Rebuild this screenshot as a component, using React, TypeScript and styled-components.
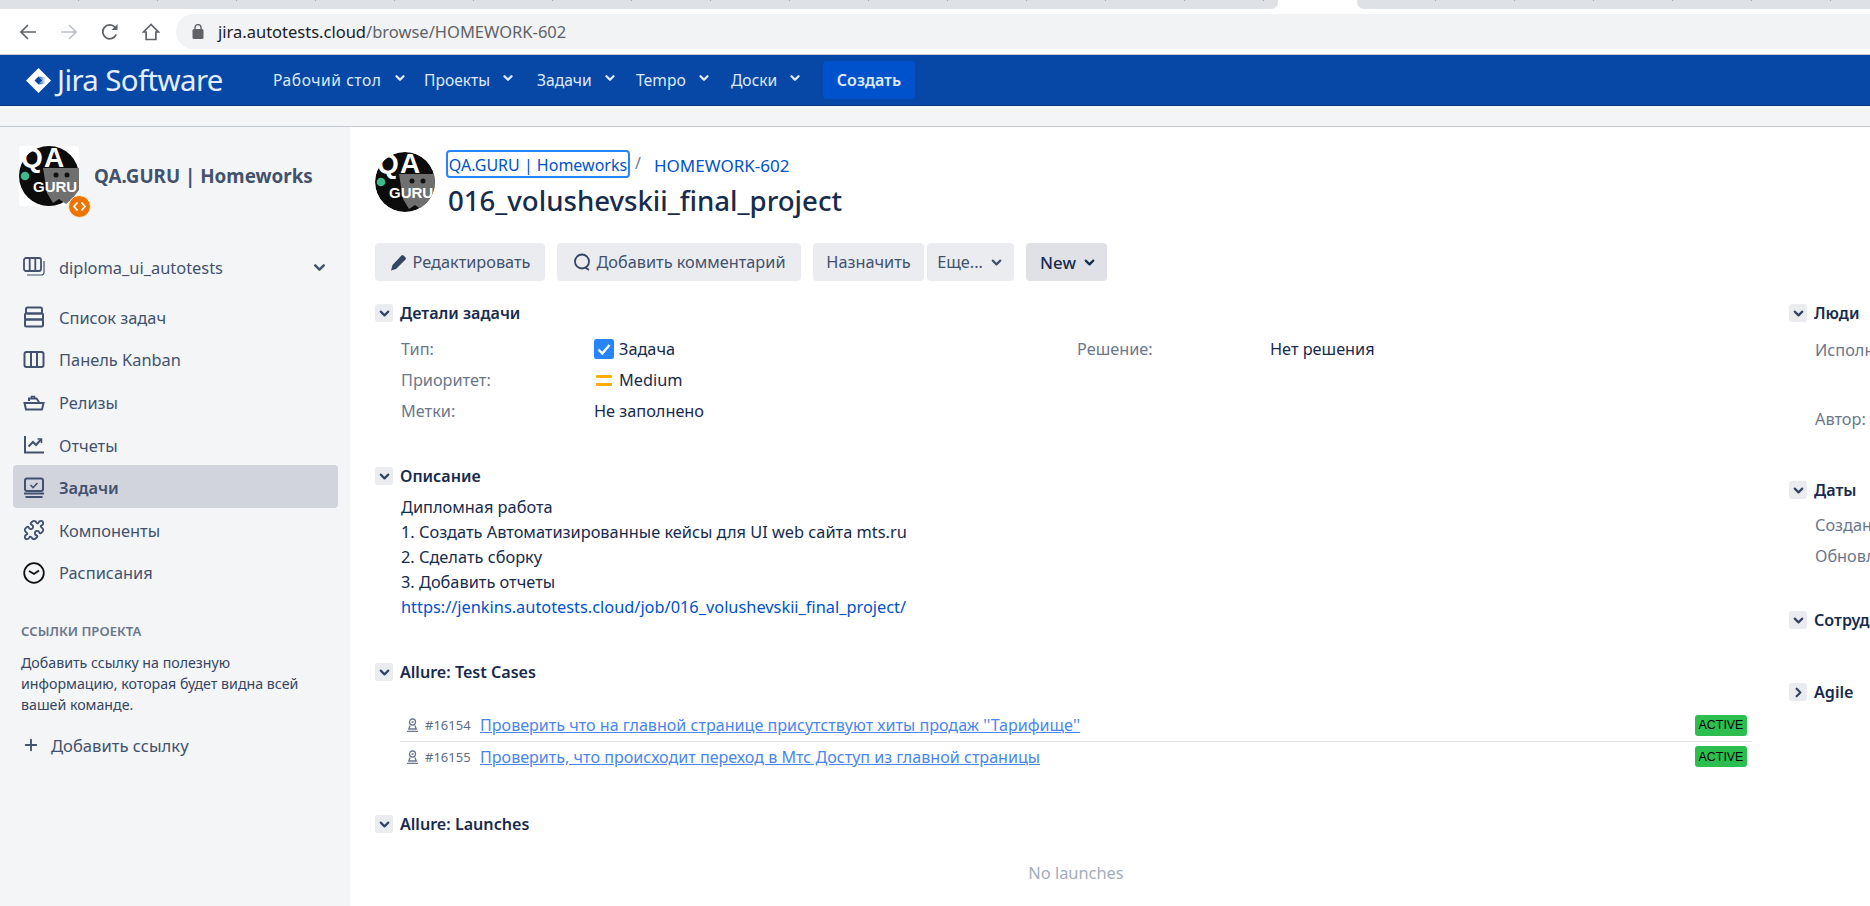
import React from 'react';
import styled, { createGlobalStyle } from 'styled-components';
import { ChevronDown, ChevronRight, Plus, Puzzle } from 'lucide-react';

const UI_FONT = '"Noto Sans", "Open Sans", sans-serif';

const GlobalStyle = createGlobalStyle`
  html, body {
    margin: 0;
    padding: 0;
    width: 1870px;
    height: 906px;
    overflow: hidden;
    background: #fff;
    font-family: ${UI_FONT};
    font-size: 16.3px;
    color: #172b4d;
  }
  * { box-sizing: border-box; }
`;

const Page = styled.div`
  width: 1870px;
  height: 906px;
  display: flex;
  flex-direction: column;
  overflow: hidden;
`;

const TabStrip = styled.div`
  height: 9px;
  display: flex;
  flex: none;
  background: #fff;
`;

const TabGroup = styled.div<{ $side: 'left' | 'right' }>`
  height: 9px;
  background-color: #dee1e6;
  background-image: repeating-linear-gradient(90deg, transparent 0 78px, #a9adb3 78px 79px);
  background-size: 100% 1px;
  background-repeat: no-repeat;
  ${(p) => (p.$side === 'left'
    ? 'width: 1278px; border-bottom-right-radius: 7px;'
    : 'margin-left: 79px; flex: 1; border-bottom-left-radius: 7px;')}
`;

const BrowserBar = styled.div`
  height: 46px;
  flex: none;
  display: flex;
  align-items: flex-start;
  padding: 5px 0 0 19px;
  background: #fff;
  border-bottom: 1px solid #c8cacd;
`;

const BrowserButtons = styled.div`
  width: 157px;
  height: 35px;
  flex: none;
  display: flex;
  align-items: center;
  gap: 23px;
`;

const AddressBar = styled.div`
  flex: 1;
  height: 35px;
  display: flex;
  align-items: center;
  gap: 14px;
  padding-left: 16px;
  background: #f1f3f4;
  border-radius: 18px 0 0 18px;
  font-size: 16.5px;
  color: #5f6368;
  white-space: nowrap;
`;

const Host = styled.span`
  color: #202124;
`;

const TopNav = styled.nav`
  height: 51px;
  flex: none;
  display: flex;
  align-items: center;
  padding-left: 26px;
  background: #0747a6;
  border-bottom: 1px solid #0b3a7c;
  color: #deebff;
`;

const Brand = styled.div`
  display: flex;
  align-items: center;
  gap: 6px;
  width: 247px;
  flex: none;
  font-size: 29.4px;
  letter-spacing: -0.6px;
  color: #e6eefc;
`;

const NavItem = styled.div<{ $width: number; $wide?: boolean }>`
  width: ${(p) => p.$width}px;
  flex: none;
  display: flex;
  align-items: center;
  gap: 11px;
  font-size: 15.6px;
  white-space: nowrap;
  letter-spacing: ${(p) => (p.$wide ? '0.55px' : '0')};
`;

const NavCaret = styled(ChevronDown)`
  margin-top: -4px;
`;

const CreateButton = styled.div`
  width: 92px;
  height: 38px;
  flex: none;
  display: flex;
  align-items: center;
  justify-content: center;
  border-radius: 4px;
  background: #0052cc;
  color: #deebff;
  font-size: 16px;
  font-weight: 600;
`;

const SubHeader = styled.div`
  height: 21px;
  flex: none;
  background: #f4f5f7;
  border-bottom: 1px solid #c1c7d0;
`;

const Body = styled.div`
  flex: 1;
  min-height: 0;
  display: flex;
`;

const Sidebar = styled.aside`
  width: 350px;
  flex: none;
  padding: 19px 12px 0 13px;
  background: #f4f5f7;
  color: #42526e;
`;

const ProjectHead = styled.div`
  display: flex;
  align-items: flex-start;
  gap: 15px;
  padding-left: 6px;
`;

const AvatarWrap = styled.div`
  position: relative;
  width: 60px;
  height: 60px;
  flex: none;
`;

const ProjectBadge = styled.div`
  position: absolute;
  right: -12px;
  bottom: -12px;
  width: 23px;
  height: 23px;
  border-radius: 50%;
  background: #ee7400;
  border: 1px solid #f4f5f7;
  display: flex;
  align-items: center;
  justify-content: center;
`;

const ProjectName = styled.div`
  margin-top: 17px;
  font-size: 18.8px;
  line-height: 26px;
  font-weight: 700;
  white-space: nowrap;
`;

const SideList = styled.div<{ $top: number }>`
  margin-top: ${(p) => p.$top}px;
  display: flex;
  flex-direction: column;
`;

const SideItem = styled.div<{ $active?: boolean }>`
  height: 42.6px;
  display: flex;
  align-items: center;
  gap: 14px;
  padding: 2px 10px 0;
  border-radius: 4px;
  font-size: 16.4px;
  white-space: nowrap;
  background: ${(p) => (p.$active ? '#d2d4dd' : 'transparent')};
  font-weight: ${(p) => (p.$active ? 600 : 400)};
`;

const BoardPicker = styled(SideItem)`
  padding-top: 0;
  justify-content: space-between;
`;

const PickerLabel = styled.div`
  display: flex;
  align-items: center;
  gap: 14px;
`;

const SideHeading = styled.div`
  margin: 29px 0 0 8px;
  font-size: 13.2px;
  line-height: 18px;
  font-weight: 600;
  color: #6b778c;
`;

const SideNote = styled.p`
  margin: 12px 0 0 8px;
  font-size: 14.2px;
  line-height: 21px;
  color: #344563;
`;

const AddLink = styled.div`
  margin: 18px 0 0 9px;
  height: 24px;
  display: flex;
  align-items: center;
  gap: 11px;
  font-size: 16.6px;
`;

const Content = styled.main`
  flex: 1;
  min-width: 0;
  display: grid;
  grid-template-columns: 1377px 1fr;
  column-gap: 37px;
  padding-left: 25px;
  background: #fff;
`;

const MainColumn = styled.div`
  padding-top: 23px;
`;

const IssueHead = styled.div`
  display: flex;
  gap: 11px;
`;

const HeadAvatar = styled.div`
  width: 60px;
  height: 60px;
  flex: none;
  margin-top: 2px;
  border-radius: 50%;
  overflow: hidden;
`;

const Breadcrumbs = styled.div`
  height: 28px;
  display: flex;
  align-items: center;
  font-size: 17px;
  color: #0052cc;
  white-space: nowrap;
`;

const FocusedCrumb = styled.span`
  height: 28px;
  width: 184px;
  padding-top: 2px;
  display: flex;
  align-items: center;
  justify-content: center;
  border: 2px solid #2684ff;
  border-radius: 4px;
  font-size: 16px;
`;

const CrumbSlash = styled.span`
  width: 24px;
  padding-left: 5px;
  margin-top: -3px;
  font-size: 16px;
  color: #6b778c;
`;

const CrumbKey = styled.span`
  padding-top: 3px;
`;

const IssueTitle = styled.h1`
  margin: 2px 0 0 2px;
  height: 40px;
  font-size: 27.6px;
  line-height: 40px;
  font-weight: 500;
  color: #172b4d;
  white-space: nowrap;
`;

const Toolbar = styled.div`
  margin-top: 23px;
  height: 38px;
  display: flex;
`;

const ToolButton = styled.div<{ $width: number; $gap: number; $strong?: boolean }>`
  width: ${(p) => p.$width}px;
  margin-right: ${(p) => p.$gap}px;
  padding-left: ${(p) => (p.$strong ? 4 : 0)}px;
  height: 38px;
  flex: none;
  display: flex;
  align-items: center;
  justify-content: center;
  gap: 6px;
  border-radius: 4px;
  font-size: ${(p) => (p.$strong ? '16.8px' : '16.3px')};
  white-space: nowrap;
  background: ${(p) => (p.$strong ? '#dfe1e6' : '#ebecf0')};
  color: ${(p) => (p.$strong ? '#172b4d' : '#42526e')};
  font-weight: ${(p) => (p.$strong ? 500 : 400)};
`;

const SectionHead = styled.div<{ $top: number }>`
  margin-top: ${(p) => p.$top}px;
  height: 20px;
  display: flex;
  align-items: center;
  gap: 7px;
  font-size: 16.1px;
  font-weight: 600;
  color: #172b4d;
  white-space: nowrap;
`;

const Toggle = styled.span`
  width: 18px;
  height: 18px;
  flex: none;
  display: flex;
  align-items: center;
  justify-content: center;
  border-radius: 3px;
  background: #ebecf0;
  color: #344563;
`;

const DetailGrid = styled.div`
  margin-top: 10.5px;
  padding-left: 26px;
  display: grid;
  grid-template-columns: 193px 483px 193px 1fr;
  grid-auto-rows: 31px;
  align-items: center;
  font-size: 16.3px;
`;

const FieldLabel = styled.div`
  color: #6b778c;
  white-space: nowrap;
`;

const FieldValue = styled.div`
  display: flex;
  align-items: center;
  gap: 5px;
  color: #172b4d;
`;

const Description = styled.div`
  margin-top: 8.5px;
  padding-left: 26px;
  font-size: 16.35px;
  line-height: 25px;
  color: #172b4d;
`;

const PlainLink = styled.div`
  color: #0052cc;
`;

const CaseList = styled.div`
  margin: 29px 0 0 25px;
`;

const CaseRow = styled.div<{ $divider?: boolean }>`
  height: 31px;
  display: flex;
  align-items: center;
  padding: 0 5px 2px 6px;
  font-size: 16.1px;
  white-space: nowrap;
  border-bottom: ${(p) => (p.$divider ? '1px solid #e4e6ed' : 'none')};
`;

const CaseId = styled.span`
  width: 45px;
  margin: 0 10px 0 6px;
  font-size: 13px;
  color: #5e6c84;
`;

const CaseLink = styled.span`
  flex: 1;
  color: #4a86f0;
  text-decoration: underline;
`;

const StatusBadge = styled.span`
  width: 52px;
  height: 21px;
  display: flex;
  align-items: center;
  justify-content: center;
  border-radius: 3px;
  background: #2cbe4e;
  color: #000;
  font-family: "Liberation Sans", Arial, sans-serif;
  font-size: 12.4px;
`;

const EmptyNote = styled.div`
  margin: 27px 0 0 25px;
  height: 24px;
  line-height: 24px;
  text-align: center;
  font-size: 16.4px;
  color: #a5adba;
`;

const SideColumn = styled.div`
  padding-top: 176px;
  white-space: nowrap;
`;

const PeopleRow = styled.div<{ $top: number }>`
  margin-top: ${(p) => p.$top}px;
  padding-left: 26px;
  height: 24px;
  line-height: 24px;
  font-size: 16.3px;
  color: #6b778c;
`;

const JiraMark = () => (
  <svg width="25" height="25" viewBox="0 0 25 25">
    <defs>
      <linearGradient id="jiraFade" x1="0" y1="0" x2="1" y2="0">
        <stop offset="0" stopColor="#0747a6" />
        <stop offset="1" stopColor="#fff" />
      </linearGradient>
    </defs>
    <path
      d="M12.5 0 L25 12.5 L12.500 25 L0 12.500 Z M12.500 8.500 L8.500 12.500 L12.500 16.500 L16.500 12.500 Z"
      fill="#fff"
      fillRule="evenodd"
    />
    <path d="M12.500 8.500 L16.500 12.500 L12.500 16.500 L19 16 L19.500 9.500 Z" fill="url(#jiraFade)" />
  </svg>
);

const BackIcon = ({ color = '#5f6368' }: { color?: string }) => (
  <svg width="18" height="18" viewBox="0 0 18 18" fill="none" stroke={color} strokeWidth="1.7">
    <path d="M17 9H2M9 2L2 9l7 7" />
  </svg>
);

const ForwardIcon = () => (
  <svg width="18" height="18" viewBox="0 0 18 18" fill="none" stroke="#bdc1c6" strokeWidth="1.7">
    <path d="M1 9h15M9 2l7 7-7 7" />
  </svg>
);

const ReloadIcon = () => (
  <svg width="18" height="18" viewBox="0 0 18 18" fill="none" stroke="#5f6368" strokeWidth="1.8">
    <path d="M15.2 11.5A7 7 0 1 1 14 4.2" />
    <path d="M16.5 1v6h-6z" fill="#5f6368" stroke="none" />
  </svg>
);

const HomeIcon = () => (
  <svg width="18" height="18" viewBox="0 0 18 18" fill="none" stroke="#5f6368" strokeWidth="1.7">
    <path d="M9 1.500L1.500 9h2.600v7.500h9.800V9h2.600z" />
  </svg>
);

const LockIcon = () => (
  <svg width="12" height="15" viewBox="0 0 12 15" fill="#5f6368">
    <rect x="0.5" y="5" width="11" height="10" rx="1.5" />
    <path d="M3 5V3.600a3 3 0 0 1 6 0V5" fill="none" stroke="#5f6368" strokeWidth="1.4" />
  </svg>
);

const BoardIcon = () => (
  <svg width="22" height="22" viewBox="0 0 22 22" fill="none" stroke="#42526e" strokeWidth="1.8">
    <rect x="1" y="2" width="17" height="13" rx="2" />
    <path d="M6.700 2v13M12.300 2v13" />
    <path d="M4 19h14.500a2.500 2.500 0 0 0 2.500-2.500V5" strokeWidth="1.2" />
  </svg>
);

const BacklogIcon = () => (
  <svg width="22" height="22" viewBox="0 0 22 22" fill="none" stroke="#42526e" strokeWidth="2">
    <rect x="3" y="1.500" width="16" height="6" rx="1.500" />
    <rect x="2" y="7.500" width="18" height="6" rx="1" />
    <rect x="2" y="13.500" width="18" height="7" rx="1.500" />
  </svg>
);

const KanbanIcon = () => (
  <svg width="22" height="22" viewBox="0 0 22 22" fill="none" stroke="#42526e" strokeWidth="2">
    <rect x="1.500" y="3" width="19" height="15" rx="2" />
    <path d="M8 3v15M14 3v15" />
  </svg>
);

const ReleaseIcon = () => (
  <svg width="22" height="22" viewBox="0 0 22 22" fill="none" stroke="#42526e" strokeWidth="2">
    <path d="M6 9V6.500h7.500L16 10" />
    <path d="M1.500 11h19l-1.500 6.500H3z" />
    <path d="M8.500 6.500V4.500h3v2" strokeWidth="1.6" />
  </svg>
);

const ReportIcon = () => (
  <svg width="22" height="22" viewBox="0 0 22 22" fill="none" stroke="#42526e" strokeWidth="2">
    <path d="M2 2v16.500h19" />
    <path d="M5.500 12.500L10 8l3 3 5-5.500" />
    <path d="M14.500 5h4v4" strokeWidth="1.6" />
  </svg>
);

const IssuesIcon = () => (
  <svg width="22" height="22" viewBox="0 0 22 22" fill="none" stroke="#42526e" strokeWidth="2">
    <rect x="2" y="1.500" width="18" height="12.500" rx="2" />
    <path d="M7.500 8l2.500 2.500 4.500-4.500" strokeWidth="1.6" />
    <path d="M1 16.500h20M2.500 20h17" />
  </svg>
);

const ScheduleIcon = () => (
  <svg width="22" height="22" viewBox="0 0 22 22" fill="none" stroke="#111" strokeWidth="1.8">
    <circle cx="11" cy="11" r="9.800" />
    <path d="M6 9l5 3 5-3.500" />
  </svg>
);

const TaskIcon = () => (
  <svg width="20" height="20" viewBox="0 0 20 20">
    <rect width="20" height="20" rx="2.500" fill="#2684ff" />
    <path d="M4.500 10.500l3.800 4L15.500 6" fill="none" stroke="#fff" strokeWidth="2.400" />
  </svg>
);

const MediumIcon = () => (
  <svg width="20" height="20" viewBox="0 0 20 20" fill="#ffab00">
    <rect x="2" y="5" width="16" height="3" rx="1" />
    <rect x="2" y="13" width="16" height="3" rx="1" />
  </svg>
);

const PencilIcon = () => (
  <svg width="17" height="17" viewBox="0 0 17 17" fill="#344563">
    <path d="M11.500 1.500a1.500 1.500 0 0 1 2.100 0l1.900 1.900a1.500 1.500 0 0 1 0 2.100L6 15l-5 1.500L2.500 11z" />
  </svg>
);

const CommentIcon = () => (
  <svg width="18" height="18" viewBox="0 0 18 18" fill="none" stroke="#344563" strokeWidth="1.800">
    <circle cx="9" cy="8.500" r="7" />
    <path d="M12.500 14.500L16 17" />
  </svg>
);

const AutomatedIcon = () => (
  <svg width="13" height="14" viewBox="0 0 13 14" fill="none" stroke="#6b778c" strokeWidth="1.300">
    <circle cx="6.500" cy="4" r="3" />
    <path d="M4 7.500l-1.200 3.500h7.400L9 7.500M1 13.300h11M5.500 4h2" />
  </svg>
);

const ProjectLogo = () => (
  <svg width="60" height="60" viewBox="0 0 60 60">
    <rect width="60" height="60" rx="3" fill="#fff" />
    <circle cx="30" cy="30" r="30" fill="#0c0c0c" />
    <path d="M24 22h36v22l-7 9-6 5-7-5-6 4-6-10z" fill="#6f6f6f" />
    <text x="2" y="21" fontFamily="Liberation Sans, sans-serif" fontWeight="700" fontSize="28" fill="#fff">Q</text>
    <text x="25" y="21" fontFamily="Liberation Sans, sans-serif" fontWeight="700" fontSize="28" fill="#fff">A</text>
    <circle cx="13" cy="11" r="4.500" fill="#0c0c0c" />
    <text x="14" y="46" fontFamily="Liberation Sans, sans-serif" fontWeight="700" fontSize="15" fill="#fff">GURU</text>
    <circle cx="6" cy="30" r="4.300" fill="#3dba8c" />
    <circle cx="37" cy="29" r="2.500" fill="#111" />
    <circle cx="48" cy="29" r="2.500" fill="#111" />
  </svg>
);

const CodeBadgeIcon = () => (
  <svg width="13" height="11" viewBox="0 0 13 11" fill="none" stroke="#fff" strokeWidth="1.800">
    <path d="M4.500 1.500L1 5.500l3.500 4M8.500 1.500l3.500 4-3.500 4" />
  </svg>
);

const navItems = [
  { label: 'Рабочий стол', width: 151, wide: true },
  { label: 'Проекты', width: 113 },
  { label: 'Задачи', width: 99 },
  { label: 'Tempo', width: 95 },
  { label: 'Доски', width: 92 },
];

const sideItems = [
  { label: 'Список задач', icon: <BacklogIcon /> },
  { label: 'Панель Kanban', icon: <KanbanIcon /> },
  { label: 'Релизы', icon: <ReleaseIcon /> },
  { label: 'Отчеты', icon: <ReportIcon /> },
  { label: 'Задачи', icon: <IssuesIcon />, active: true },
  { label: 'Компоненты', icon: <Puzzle size={22} color="#42526e" strokeWidth={2} /> },
  { label: 'Расписания', icon: <ScheduleIcon /> },
];

const testCases = [
  { id: '#16154', title: "Проверить что на главной странице присутствуют хиты продаж ''Тарифище''", divider: true },
  { id: '#16155', title: 'Проверить, что происходит переход в Мтс Доступ из главной страницы', divider: false },
];

const Section: React.FC<{ title: string; top: number; closed?: boolean }> = ({ title, top, closed }) => (
  <SectionHead $top={top}>
    <Toggle>
      {closed ? <ChevronRight size={15} strokeWidth={3.5} /> : <ChevronDown size={15} strokeWidth={3.5} />}
    </Toggle>
    {title}
  </SectionHead>
);

const App: React.FC = () => (
  <Page>
    <GlobalStyle />
    <TabStrip>
      <TabGroup $side="left" />
      <TabGroup $side="right" />
    </TabStrip>
    <BrowserBar>
      <BrowserButtons>
        <BackIcon />
        <ForwardIcon />
        <ReloadIcon />
        <HomeIcon />
      </BrowserButtons>
      <AddressBar>
        <LockIcon />
        <span>
          <Host>jira.autotests.cloud</Host>/browse/HOMEWORK-602
        </span>
      </AddressBar>
    </BrowserBar>
    <TopNav>
      <Brand>
        <JiraMark />
        Jira Software
      </Brand>
      {navItems.map((item) => (
        <NavItem key={item.label} $width={item.width} $wide={item.wide}>
          {item.label}
          <NavCaret size={14} strokeWidth={4} />
        </NavItem>
      ))}
      <CreateButton>Создать</CreateButton>
    </TopNav>
    <SubHeader />
    <Body>
      <Sidebar>
        <ProjectHead>
          <AvatarWrap>
            <ProjectLogo />
            <ProjectBadge>
              <CodeBadgeIcon />
            </ProjectBadge>
          </AvatarWrap>
          <ProjectName>QA.GURU | Homeworks</ProjectName>
        </ProjectHead>
        <SideList $top={40}>
          <BoardPicker>
            <PickerLabel>
              <BoardIcon />
              diploma_ui_autotests
            </PickerLabel>
            <ChevronDown size={17} strokeWidth={3.5} />
          </BoardPicker>
        </SideList>
        <SideList $top={6.5}>
          {sideItems.map((item) => (
            <SideItem key={item.label} $active={item.active}>
              {item.icon}
              {item.label}
            </SideItem>
          ))}
        </SideList>
        <SideHeading>ССЫЛКИ ПРОЕКТА</SideHeading>
        <SideNote>
          Добавить ссылку на полезную
          <br />
          информацию, которая будет видна всей
          <br />
          вашей команде.
        </SideNote>
        <AddLink>
          <Plus size={18} strokeWidth={2.5} />
          Добавить ссылку
        </AddLink>
      </Sidebar>
      <Content>
        <MainColumn>
          <IssueHead>
            <HeadAvatar>
              <ProjectLogo />
            </HeadAvatar>
            <div>
              <Breadcrumbs>
                <FocusedCrumb>QA.GURU | Homeworks</FocusedCrumb>
                <CrumbSlash>/</CrumbSlash>
                <CrumbKey>HOMEWORK-602</CrumbKey>
              </Breadcrumbs>
              <IssueTitle>016_volushevskii_final_project</IssueTitle>
            </div>
          </IssueHead>
          <Toolbar>
            <ToolButton $width={170} $gap={12}>
              <PencilIcon />
              Редактировать
            </ToolButton>
            <ToolButton $width={244} $gap={12}>
              <CommentIcon />
              Добавить комментарий
            </ToolButton>
            <ToolButton $width={111} $gap={3}>
              Назначить
            </ToolButton>
            <ToolButton $width={87} $gap={12}>
              Еще...
              <ChevronDown size={15} strokeWidth={3.5} />
            </ToolButton>
            <ToolButton $width={81} $gap={0} $strong>
              New
              <ChevronDown size={15} strokeWidth={3.5} />
            </ToolButton>
          </Toolbar>
          <Section title="Детали задачи" top={22} />
          <DetailGrid>
            <FieldLabel>Тип:</FieldLabel>
            <FieldValue>
              <TaskIcon />
              Задача
            </FieldValue>
            <FieldLabel>Решение:</FieldLabel>
            <FieldValue>Нет решения</FieldValue>
            <FieldLabel>Приоритет:</FieldLabel>
            <FieldValue>
              <MediumIcon />
              Medium
            </FieldValue>
            <span />
            <span />
            <FieldLabel>Метки:</FieldLabel>
            <FieldValue>Не заполнено</FieldValue>
          </DetailGrid>
          <Section title="Описание" top={39.5} />
          <Description>
            Дипломная работа
            <br />
            1. Создать Автоматизированные кейсы для UI web сайта mts.ru
            <br />
            2. Сделать сборку
            <br />
            3. Добавить отчеты
            <PlainLink>https://jenkins.autotests.cloud/job/016_volushevskii_final_project/</PlainLink>
          </Description>
          <Section title="Allure: Test Cases" top={42.5} />
          <CaseList>
            {testCases.map((item) => (
              <CaseRow key={item.id} $divider={item.divider}>
                <AutomatedIcon />
                <CaseId>{item.id}</CaseId>
                <CaseLink>{item.title}</CaseLink>
                <StatusBadge>ACTIVE</StatusBadge>
              </CaseRow>
            ))}
          </CaseList>
          <Section title="Allure: Launches" top={41} />
          <EmptyNote>No launches</EmptyNote>
        </MainColumn>
        <SideColumn>
          <Section title="Люди" top={0} />
          <PeopleRow $top={15}>Исполнитель:</PeopleRow>
          <PeopleRow $top={45}>Автор:</PeopleRow>
          <Section title="Даты" top={49} />
          <PeopleRow $top={13}>Создано:</PeopleRow>
          <PeopleRow $top={7}>Обновлено:</PeopleRow>
          <Section title="Сотрудники" top={42} />
          <Section title="Agile" top={52} closed />
        </SideColumn>
      </Content>
    </Body>
  </Page>
);

export default App;
